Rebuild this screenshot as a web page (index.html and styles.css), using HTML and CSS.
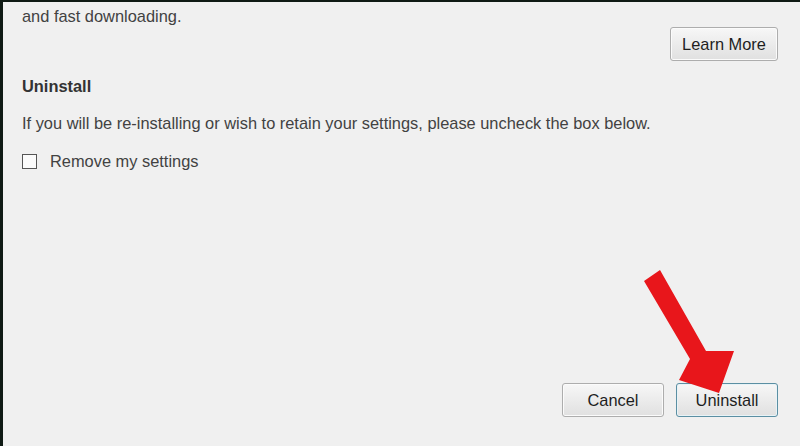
FILE: index.html
```html
<!DOCTYPE html>
<html>
<head>
<meta charset="utf-8">
<link rel="stylesheet" href="styles.css">
</head>
<body>
<div class="frame">
  <div class="content">
    <p class="intro">and fast downloading.</p>
    <div class="learn-row">
      <button class="btn learn">Learn More</button>
    </div>
    <h2 class="heading">Uninstall</h2>
    <p class="desc">If you will be re-installing or wish to retain your settings, please uncheck the box below.</p>
    <label class="check-row">
      <span class="box"></span>
      <span class="check-label">Remove my settings</span>
    </label>
  </div>
  <div class="footer">
    <button class="btn cancel">Cancel</button>
    <button class="btn primary">Uninstall</button>
  </div>
  <svg class="arrow" width="800" height="446" viewBox="0 0 800 446">
    <polygon points="660,270 644,281 690,359 679,380 719,393 734,351 706,351" fill="#e8161b"/>
  </svg>
</div>
</body>
</html>
```
FILE: styles.css
```css
html, body {
  margin: 0;
  padding: 0;
  width: 800px;
  height: 446px;
  overflow: hidden;
  background: #f0f0f0;
}
.frame {
  position: relative;
  box-sizing: border-box;
  width: 800px;
  height: 446px;
  border-left: 3px solid #0f1a14;
  border-top: 2px solid #0f1a14;
  background: #f0f0f0;
  display: flex;
  flex-direction: column;
  font-family: "Liberation Sans", Arial, sans-serif;
  font-size: 16.4px;
  color: #424242;
}
.content {
  flex: 1;
  padding: 5px 22px 0 19px;
  display: flex;
  flex-direction: column;
}
.intro {
  margin: 0;
  line-height: 18px;
}
.learn-row {
  display: flex;
  justify-content: flex-end;
  margin-top: 2px;
}
.btn {
  font-family: "Liberation Sans", Arial, sans-serif;
  font-size: 16.4px;
  color: #1e1e1e;
  background: linear-gradient(#f7f7f7, #e0e0e0);
  border: 1px solid #adadad;
  border-radius: 3px;
  height: 34px;
  padding: 0;
  box-shadow: inset 0 0 0 1px #fbfbfb;
}
.learn {
  width: 108px;
}
.heading {
  margin: 16px 0 0;
  font-size: 16.4px;
  font-weight: bold;
  line-height: 18px;
  color: #333;
}
.desc {
  margin: 19px 0 0;
  line-height: 18px;
}
.check-row {
  display: flex;
  align-items: center;
  margin-top: 20px;
  gap: 13px;
}
.box {
  width: 13px;
  height: 13px;
  border: 1px solid #555;
  background: #fbfbfb;
}
.check-label {
  line-height: 18px;
}
.footer {
  display: flex;
  justify-content: flex-end;
  gap: 12px;
  padding: 0 22px 29px 0;
}
.cancel {
  width: 102px;
}
.primary {
  width: 102px;
  border-color: #5b8fa3;
  box-shadow: inset 0 0 0 1px #e8f3f7;
}
.arrow {
  position: absolute;
  left: -3px;
  top: -2px;
  pointer-events: none;
}
```
